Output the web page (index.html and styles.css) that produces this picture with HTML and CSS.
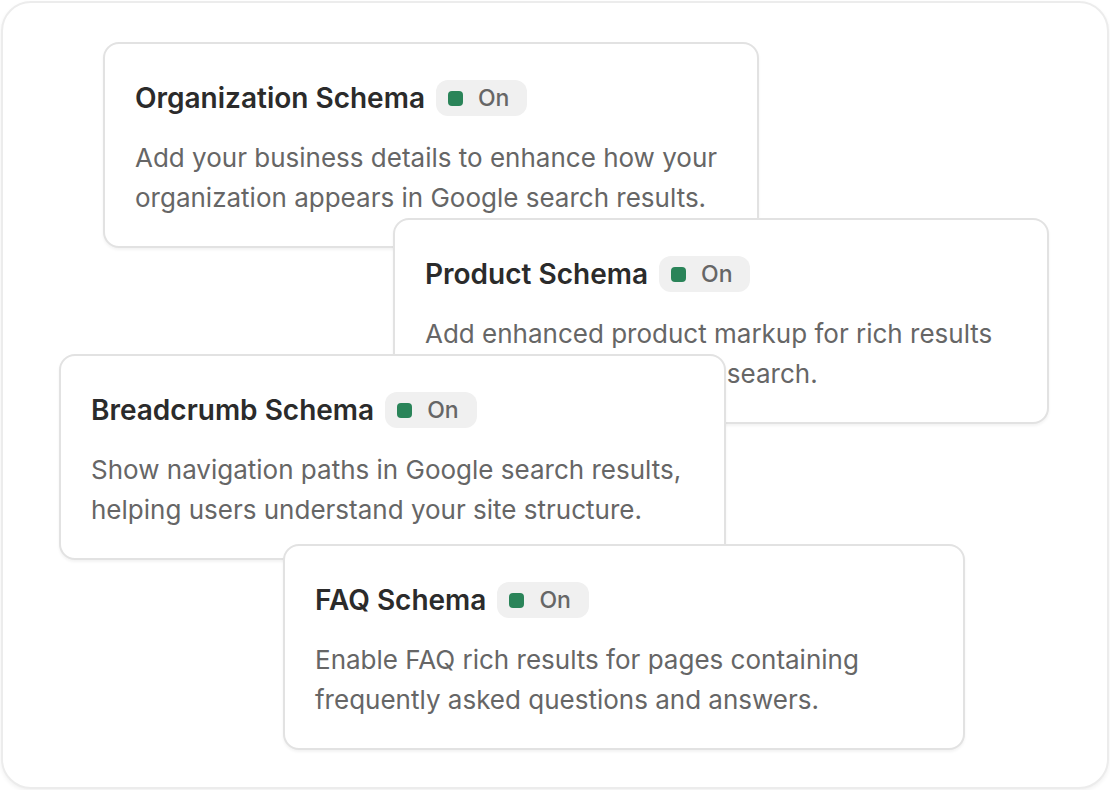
FILE: index.html
```html
<!DOCTYPE html>
<html lang="en">
<head>
<meta charset="utf-8">
<title>Schema cards</title>
<link rel="stylesheet" href="styles.css">
</head>
<body>
<div class="frame">
  <div class="canvas">
    <div class="card card-org">
      <div class="card-head">
        <h3 class="card-title">Organization Schema</h3>
        <span class="badge"><span class="dot"></span>On</span>
      </div>
      <p class="card-desc">Add your business details to enhance how your organization appears in Google search results.</p>
    </div>
    <div class="card card-product">
      <div class="card-head">
        <h3 class="card-title">Product Schema</h3>
        <span class="badge"><span class="dot"></span>On</span>
      </div>
      <p class="card-desc">Add enhanced product markup for rich results in Google Shopping and search.</p>
    </div>
    <div class="card card-bread">
      <div class="card-head">
        <h3 class="card-title">Breadcrumb Schema</h3>
        <span class="badge"><span class="dot"></span>On</span>
      </div>
      <p class="card-desc">Show navigation paths in Google search results, helping users understand your site structure.</p>
    </div>
    <div class="card card-faq">
      <div class="card-head">
        <h3 class="card-title">FAQ Schema</h3>
        <span class="badge"><span class="dot"></span>On</span>
      </div>
      <p class="card-desc">Enable FAQ rich results for pages containing frequently asked questions and answers.</p>
    </div>
  </div>
</div>
</body>
</html>
```
FILE: styles.css
```css
* { box-sizing: border-box; }
html, body {
  margin: 0;
  padding: 0;
  background: #ffffff;
  font-family: Inter, "Noto Sans", "Liberation Sans", sans-serif;
}
.frame {
  width: 1108px;
  height: 788px;
  margin: 1px;
  border: 2px solid #ececec;
  border-radius: 30px;
  background: #ffffff;
  box-shadow: 0 2px 4px rgba(0,0,0,0.06);
  overflow: hidden;
}
.canvas {
  position: relative;
  width: 100%;
  height: 100%;
}
.card {
  position: absolute;
  background: #ffffff;
  border: 2px solid #e2e2e2;
  border-radius: 16px;
  box-shadow: 0 2px 3px rgba(0,0,0,0.05);
  padding: 30px 30px 28px 30px;
  height: 206px;
}
.card-org { left: 100px; top: 39px; width: 656px; }
.card-product { left: 390px; top: 215px; width: 656px; }
.card-bread { left: 56px; top: 351px; width: 667px; }
.card-faq { left: 280px; top: 541px; width: 682px; }
.card-head {
  display: flex;
  align-items: center;
  gap: 11px;
  height: 48px;
}
.card-title {
  margin: 0;
  font-size: 28px;
  font-weight: 600;
  color: #2b2b2b;
  letter-spacing: 0;
}
.badge {
  display: inline-flex;
  align-items: center;
  gap: 15px;
  height: 36px;
  padding: 0 18px 0 12px;
  border-radius: 12px;
  background: #f0f0f0;
  color: #666666;
  font-size: 23px;
  font-weight: 500;
}
.dot {
  width: 15px;
  height: 15px;
  border-radius: 4px;
  background: #2a8459;
}
.card-desc {
  margin: 16px 0 0 0;
  font-size: 26px;
  line-height: 40px;
  color: #666666;
}
```
